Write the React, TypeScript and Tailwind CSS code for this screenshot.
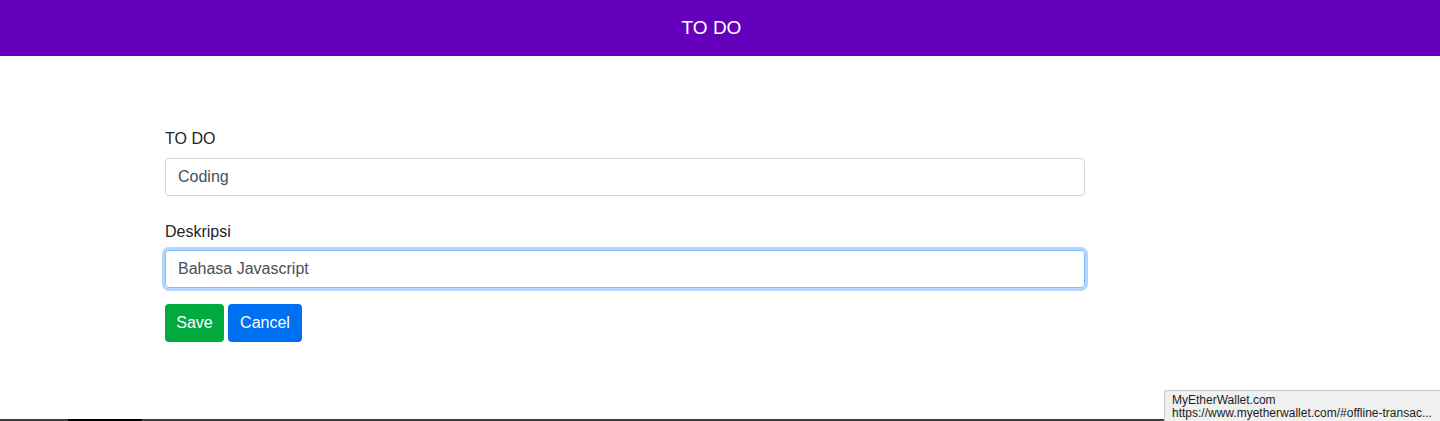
import React, { useState } from 'react';

const App: React.FC = () => {
  const [todo, setTodo] = useState('Coding');
  const [desc, setDesc] = useState('Bahasa Javascript');

  return (
    <div className="relative h-[421px] w-[1440px] overflow-hidden bg-white font-['Liberation_Sans',Arial,sans-serif] text-[#212529]">
      {/* Header */}
      <header className="flex h-14 items-center justify-center bg-[#6400bc] pr-[17px]">
        <h1 className="text-[19px] text-white">TO DO</h1>
      </header>

      {/* Form */}
      <form className="w-[920px] ml-[165px] pt-[71px]" onSubmit={(e) => e.preventDefault()}>
        <div className="mb-6">
          <label className="mb-[7px] block text-[16px] leading-6">TO DO</label>
          <input
            value={todo}
            onChange={(e) => setTodo(e.target.value)}
            className="block h-[38px] w-full rounded-[4px] border border-[#ced4da] px-3 text-[16px] text-[#495057] outline-none"
          />
        </div>
        <div className="mb-4">
          <label className="mb-[6px] block text-[16px] leading-6">Deskripsi</label>
          <input
            value={desc}
            onChange={(e) => setDesc(e.target.value)}
            className="block h-[38px] w-full rounded-[4px] border border-[#80bdff] px-3 text-[16px] text-[#495057] outline-none shadow-[0_0_0_3px_rgba(120,178,255,0.55)]"
          />
        </div>
        <div className="flex gap-1">
          <button type="submit" className="h-[38px] w-[59px] rounded-[4px] bg-[#00aa3f] text-[16px] text-white">
            Save
          </button>
          <button type="button" className="h-[38px] w-[74px] rounded-[4px] bg-[#0070f2] text-[16px] text-white">
            Cancel
          </button>
        </div>
      </form>

      {/* Bottom window edge */}
      <div className="absolute bottom-0 left-0 flex h-[2px] w-full bg-[#3d3d3d]">
        <div className="ml-[68px] h-full w-[74px] bg-black" />
      </div>

      {/* Link tooltip */}
      <div className="absolute bottom-0 right-0 h-[31px] w-[276px] rounded-tl-[3px] border-l border-t border-[#c8c8c8] bg-[#f0f0f0] pl-[7px] pt-[3px] text-[12px] leading-[13px] text-[#222] whitespace-nowrap">
        <div>MyEtherWallet.com</div>
        <div>https://www.myetherwallet.com/#offline-transac...</div>
      </div>
    </div>
  );
};

export default App;
